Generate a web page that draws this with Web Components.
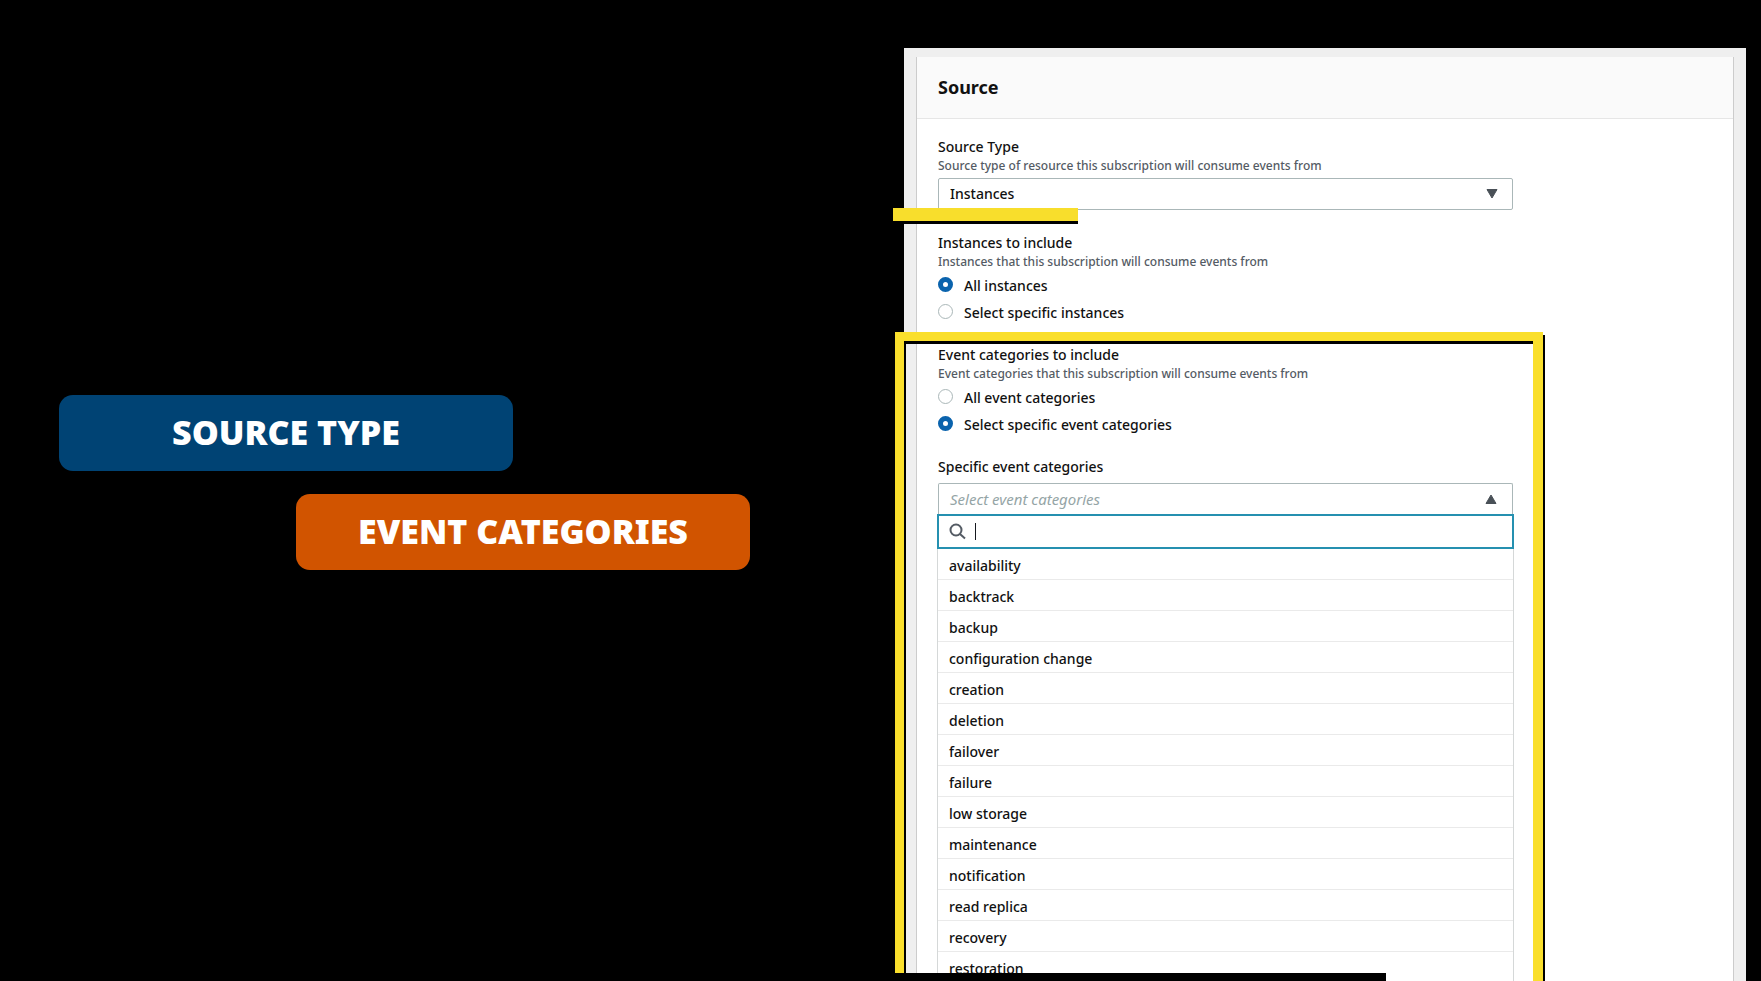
<!DOCTYPE html>
<html lang="en">
<head>
<meta charset="utf-8">
<title>Event subscription source</title>
<style>
  html, body { margin: 0; background: #000; }
  body { font-family: "Noto Sans", "Open Sans", sans-serif; font-size: 14px; font-weight: 500; line-height: 18px; color: #111; }
</style>
</head>
<body>
<video-stage>
  <topic-pill slot="topics" tone="blue">SOURCE TYPE</topic-pill>
  <topic-pill slot="topics" tone="orange">EVENT CATEGORIES</topic-pill>
  <console-panel heading="Source">
    <select-field label="Source Type" hint="Source type of resource this subscription will consume events from" value="Instances"></select-field>
    <radio-group label="Instances to include" hint="Instances that this subscription will consume events from" options="All instances|Select specific instances" checked="0"></radio-group>
    <highlight-frame>
      <radio-group label="Event categories to include" hint="Event categories that this subscription will consume events from" options="All event categories|Select specific event categories" checked="1"></radio-group>
      <category-picker label="Specific event categories" placeholder="Select event categories" options="availability|backtrack|backup|configuration change|creation|deletion|failover|failure|low storage|maintenance|notification|read replica|recovery|restoration"></category-picker>
    </highlight-frame>
  </console-panel>
</video-stage>

<script>
const make = (host, html) => {
  const t = document.createElement('template');
  t.innerHTML = '<style>*{box-sizing:border-box}</style>' + html;
  host.attachShadow({ mode: 'open' }).append(t.content.cloneNode(true));
};

customElements.define('video-stage', class extends HTMLElement {
  connectedCallback() {
    make(this, `
      <style>
        :host { display: grid; grid-template-columns: minmax(0, 904fr) minmax(0, 842fr); position: relative; height: 100vh; padding: 48px 15px 0 0; box-sizing: border-box; overflow: hidden; background: #000; }
        .topics { display: flex; flex-direction: column; justify-content: center; gap: 23px; padding: 0 154px 64px 59px; }
        ::slotted(topic-pill:last-of-type) { align-self: flex-end; }
        .progress { position: absolute; left: 0; bottom: 0; width: 1386px; max-width: 79%; height: 8px; background: #000; z-index: 5; }
      </style>
      <div class="topics"><slot name="topics"></slot></div>
      <slot></slot>
      <div class="progress"></div>`);
  }
});

customElements.define('topic-pill', class extends HTMLElement {
  connectedCallback() {
    make(this, `
      <style>
        :host { display: flex; align-items: center; justify-content: center; width: 454px; max-width: 100%; height: 76px; padding-bottom: 2px; border-radius: 14px; box-sizing: border-box; color: #fff; font-size: 34px; font-weight: 900; line-height: 40px; white-space: nowrap; }
        :host([tone=blue]) { background: #004374; }
        :host([tone=orange]) { background: #d15400; }
      </style>
      <span><slot></slot></span>`);
  }
});

customElements.define('console-panel', class extends HTMLElement {
  connectedCallback() {
    make(this, `
      <style>
        :host { display: block; padding: 9px 12px 0; background: #efefef; min-height: 100%; box-sizing: border-box; }
        section { min-height: 100%; background: #fff; border: solid #ccc; border-width: 0 1px; }
        header { display: flex; align-items: center; height: 62px; padding: 0 21px 2px; background: #fafafa; border-bottom: 1px solid #e6e6e6; }
        h2 { margin: 0; font-size: 18px; font-weight: 700; line-height: 24px; }
        .body { display: flex; flex-direction: column; gap: 24px; max-width: 596px; padding: 19px 0 0 21px; }
      </style>
      <section>
        <header><h2>${this.getAttribute('heading')}</h2></header>
        <div class="body"><slot></slot></div>
      </section>`);
  }
});

customElements.define('select-field', class extends HTMLElement {
  connectedCallback() {
    make(this, `
      <style>
        :host { display: block; position: relative; }
        label, .hint { display: block; }
        .hint { margin: 1px 0 3px; font-size: 12px; color: #545b64; }
        .box { display: grid; }
        select { grid-area: 1 / 1; appearance: none; width: 100%; height: 32px; padding: 0 11px; margin: 0; border: 1px solid #aab7b8; border-radius: 2px; background: #fff; font: inherit; color: inherit; }
        svg { grid-area: 1 / 1; justify-self: end; align-self: center; margin-right: 15px; pointer-events: none; }
        .underline { position: absolute; left: -45px; top: 70px; width: 185px; height: 13px; background: #f8de2c; box-shadow: 0 3px 0 #000; }
      </style>
      <label for="s">${this.getAttribute('label')}</label>
      <span class="hint" id="h">${this.getAttribute('hint')}</span>
      <div class="box">
        <select id="s" aria-describedby="h"><option>${this.getAttribute('value')}</option></select>
        <svg width="12" height="10" viewBox="0 0 12 10"><path d="M1 .5h10L6 9z" fill="#495057" stroke="#495057" stroke-linejoin="round"/></svg>
      </div>
      <div class="underline"></div>`);
  }
});

customElements.define('radio-group', class extends HTMLElement {
  connectedCallback() {
    const on = +this.getAttribute('checked');
    const rows = this.getAttribute('options').split('|').map((text, i) =>
      `<label><input type="radio" name="choice"${i === on ? ' checked' : ''}>${text}</label>`).join('');
    make(this, `
      <style>
        :host { display: block; }
        fieldset { margin: 0; padding: 0; border: 0; min-width: 0; }
        legend { padding: 0; }
        .hint { margin: 0 0 6px; padding-top: 1px; font-size: 12px; color: #545b64; }
        .rows { display: flex; flex-direction: column; align-items: flex-start; gap: 9px; }
        label { display: flex; align-items: flex-start; gap: 11px; }
        input { appearance: none; width: 15px; height: 15px; margin: 0; border: 1px solid #aab7b8; border-radius: 50%; background: #fff; }
        input:checked { border: 5px solid #0a63ad; }
      </style>
      <fieldset>
        <legend>${this.getAttribute('label')}</legend>
        <p class="hint">${this.getAttribute('hint')}</p>
        <div class="rows">${rows}</div>
      </fieldset>`);
  }
});

customElements.define('highlight-frame', class extends HTMLElement {
  connectedCallback() {
    make(this, `
      <style>
        :host { display: flex; flex-direction: column; gap: 24px; position: relative; }
        .frame { position: absolute; left: -43px; right: -30px; top: -14px; bottom: -40px; border: solid #fadf2c; border-width: 9px 10px 9px 9px; filter: drop-shadow(2px 3px 0 #000); pointer-events: none; z-index: 2; }
      </style>
      <slot></slot>
      <div class="frame"></div>`);
  }
});

customElements.define('category-picker', class extends HTMLElement {
  connectedCallback() {
    const items = this.getAttribute('options').split('|').map(text => `<li role="option">${text}</li>`).join('');
    make(this, `
      <style>
        :host { display: block; }
        .label { margin-bottom: 7px; }
        button { display: flex; align-items: center; justify-content: space-between; width: 100%; height: 32px; padding: 0 15px 2px 11px; border: 1px solid #aab7b8; border-bottom: 0; border-radius: 2px 2px 0 0; background: #fff; font: inherit; color: #95a5a6; }
        button span { font-size: 15px; font-style: italic; font-weight: 400; }
        .menu { margin: -1px -1px 0; }
        .search { display: flex; align-items: center; height: 35px; padding: 0 10px; border: 2px solid #2590b0; background: #fff; }
        .search::after { content: ""; order: 1; width: 1px; height: 17px; margin-left: 9px; background: #16191f; }
        input { order: 2; flex: 1; min-width: 0; height: 24px; padding: 0; border: 0; outline: 0; background: none; font: inherit; color: inherit; }
        ul { margin: 0; padding: 0; list-style: none; border: solid #d5d8d8; border-width: 0 1px; }
        li { padding: 8px 11px 4px; border-bottom: 1px solid #eaeaea; }
      </style>
      <div class="label" id="l">${this.getAttribute('label')}</div>
      <button type="button" aria-haspopup="listbox" aria-expanded="true" aria-labelledby="l">
        <span>${this.getAttribute('placeholder')}</span>
        <svg width="12" height="10" viewBox="0 0 12 10"><path d="M1 9.5h10L6 1z" fill="#495057" stroke="#495057" stroke-linejoin="round"/></svg>
      </button>
      <div class="menu">
        <div class="search">
          <svg width="17" height="17" viewBox="0 0 17 17" fill="none" stroke="#545b64" stroke-width="2"><circle cx="7" cy="7" r="5.5"/><path d="M11 11l5 4.5"/></svg>
          <input type="search" aria-label="Filter event categories">
        </div>
        <ul role="listbox" aria-labelledby="l">${items}</ul>
      </div>`);
  }
});
</script>
</body>
</html>
